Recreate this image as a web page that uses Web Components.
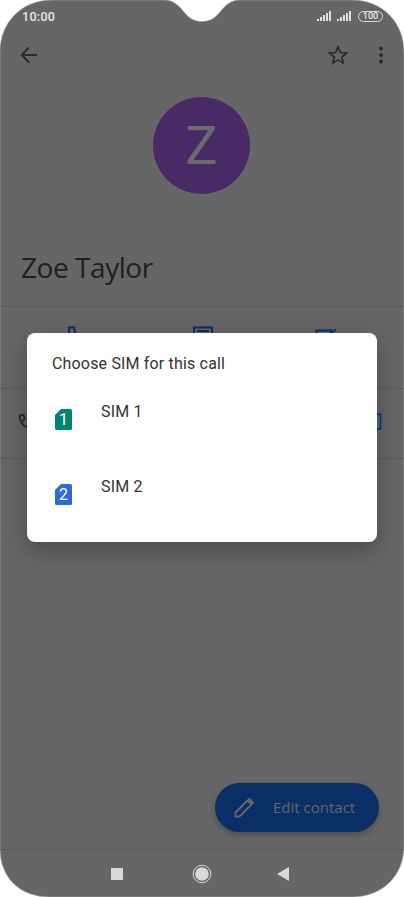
<!DOCTYPE html>
<html><head><meta charset="utf-8"><style>
html,body{margin:0;padding:0;background:#fff}
body{font-family:Roboto,"Liberation Sans",sans-serif}
</style></head><body>
<phone-screen>
<status-bar></status-bar>
<app-bar></app-bar>
<contact-head initial="Z" name="Zoe Taylor"></contact-head>
<action-row></action-row>
<call-row></call-row>
<edit-fab>Edit contact</edit-fab>
<nav-bar></nav-bar>
<sim-dialog heading="Choose SIM for this call">
  <sim-option num="1" color="#00856f">SIM 1</sim-option>
  <sim-option num="2" color="#3367d6">SIM 2</sim-option>
</sim-dialog>
</phone-screen>
<script>
function def(name,html){
  customElements.define(name,class extends HTMLElement{
    constructor(){super();this.attachShadow({mode:'open'}).innerHTML=html;}
  });
}
def('phone-screen',`<style>
:host{display:flex;flex-direction:column;position:relative;isolation:isolate;width:404px;height:897px;overflow:hidden}
.bg{position:absolute;left:0;top:0;z-index:-1}
</style>
<svg class="bg" width="404" height="897" viewBox="0 0 404 897"><path fill="#666" stroke="#aaa" stroke-width=".6" d="M52 0H166C175 1 180 7 184 12C189 18 194 21.5 202 21.5C210 21.5 215 18 220 12C224 7 229 1 238 0H352C382 0 404 22 404 52V846C404 876 382 897 352 897H50C20 897 0 878 0 848V52C0 22 22 0 52 0Z"/></svg>
<slot></slot>`);
def('status-bar',`<style>
:host{display:flex;align-items:center;justify-content:space-between;height:32px;padding:0 21px 0 22px;box-sizing:border-box;color:#e8e8e8;font:500 12.5px Roboto,sans-serif;letter-spacing:.3px}
.r{display:flex;align-items:center;gap:5px}
.bat{width:23px;height:9px;border:1px solid #ddd;border-radius:6px;font:500 9px/9px Roboto,sans-serif;text-align:center;letter-spacing:0;margin-left:1px}
svg{display:block}
</style><span>10:00</span><span class="r">
<svg width="15" height="11" viewBox="0 0 15 11" fill="#e0e0e0"><rect x="0" y="8" width="2" height="2"/><rect x="3" y="6" width="2" height="4"/><rect x="6" y="4" width="2" height="6"/><rect x="9" y="2" width="2" height="8"/><rect x="12" y="0" width="2" height="10"/></svg>
<svg width="15" height="11" viewBox="0 0 15 11" fill="#e0e0e0"><rect x="0" y="8" width="2" height="2"/><rect x="3" y="6" width="2" height="4"/><rect x="6" y="4" width="2" height="6"/><rect x="9" y="2" width="2" height="8"/><rect x="12" y="0" width="2" height="10"/></svg>
<span class="bat">100</span></span>`);
def('app-bar',`<style>
:host{display:flex;align-items:center;height:46px;padding:0 20px;box-sizing:border-box}
.sp{flex:1}svg{display:block}
.star{margin-right:31px}
</style>
<svg width="18" height="18" viewBox="0 0 18 18" fill="none" stroke="#2b2b2b" stroke-width="1.9"><path d="M17 9H2M9 1.5 1.7 9 9 16.5"/></svg>
<span class="sp"></span>
<svg class="star" width="20" height="20" viewBox="0 0 20 20" fill="none" stroke="#2b2b2b" stroke-width="1.7" stroke-linejoin="miter"><path d="M10 1.8 12.3 7.5 18.6 8 13.8 12 15.3 18.2 10 14.9 4.7 18.2 6.2 12 1.4 8 7.7 7.5Z"/></svg>
<svg width="4" height="18" viewBox="0 0 4 18" fill="#2b2b2b" style="margin-right:1px"><circle cx="2" cy="2.4" r="2"/><circle cx="2" cy="9" r="2"/><circle cx="2" cy="15.6" r="2"/></svg>`);
customElements.define('contact-head',class extends HTMLElement{
  constructor(){super();this.attachShadow({mode:'open'});}
  connectedCallback(){this.shadowRoot.innerHTML=`<style>
:host{display:block;height:229px;box-sizing:border-box;padding-top:19px;border-bottom:1px solid #5c5c5c}
.a{width:97px;height:97px;border-radius:50%;background:#472a66;color:#6b6b6b;margin:0 0 0 153px;display:flex;align-items:center;justify-content:center;font:400 54px Roboto,sans-serif}
h1{margin:55px 0 0 21px;font:400 28px/36px "Open Sans",Roboto,sans-serif;color:#1f1f1f;letter-spacing:-.45px}
</style><div class="a">${this.getAttribute('initial')}</div><h1>${this.getAttribute('name')}</h1>`;}
});
def('action-row',`<style>
:host{display:flex;height:82px;box-sizing:border-box;border-bottom:1px solid #5c5c5c;padding:19px 0 0 67px;align-items:flex-start}
svg{display:block}
</style>
<svg width="12" height="16" viewBox="0 0 12 16" fill="none" stroke="#0a2f66" stroke-width="2"><path d="M2 10V1.5H7L8.5 8"/></svg>
<svg style="margin-left:113px" width="22" height="16" viewBox="0 0 22 16" fill="none" stroke="#0a2f66" stroke-width="2"><path d="M2 15V1.5H20V15M5 5H17"/></svg>
<svg style="margin-left:101px;margin-top:3px" width="22" height="13" viewBox="0 0 22 13" fill="none" stroke="#0a2f66" stroke-width="2"><path d="M1.5 13V1.5H16V13M16 4 21 .5"/></svg>`);
def('call-row',`<style>
:host{display:flex;height:70px;box-sizing:border-box;border-bottom:1px solid #5c5c5c;padding:24px 22px 0 17px;justify-content:space-between;align-items:flex-start}
svg{display:block}
</style>
<svg width="15" height="17" viewBox="0 0 15 17" fill="none" stroke="#2b2b2b" stroke-width="1.8"><path d="M2.5 2C2.5 9 7 15 14 15.5M2.5 2H6.5L7.8 6 5 8.5"/></svg>
<svg width="10" height="17" viewBox="0 0 10 17" fill="none" stroke="#0a3f8a" stroke-width="1.8"><path d="M0 1H8.5V16H0"/></svg>`);
def('edit-fab',`<style>
:host{display:flex;align-items:center;align-self:flex-end;margin:324px 25px 0 0;width:164px;height:49px;box-sizing:border-box;padding-left:19px;border-radius:25px;background:#0a2f66;box-shadow:0 3px 6px rgba(0,0,0,.25);color:#666;font:500 15px "Open Sans",Roboto,sans-serif}
svg{display:block;margin-right:19px}
.l{margin-top:-2px}
</style>
<svg width="20" height="20" viewBox="0 0 20 20" fill="none" stroke="#666" stroke-width="1.8" stroke-linejoin="round"><path d="M1.5 18.5V14.5L13.5 2.5 17.5 6.5 5.5 18.5Z"/><path d="M14 2 15.3 .8 19.2 4.7 18 6" fill="#666"/></svg><span class="l"><slot></slot></span>`);
def('nav-bar',`<style>
:host{display:flex;align-items:center;height:48px;margin-top:17px;box-sizing:border-box;padding:0 0 0 111px;border-top:1px solid #5c5c5c}
.s{width:12px;height:12px;background:#d9d9d9}
.c{margin-left:69px}
.t{margin-left:65px}
svg{display:block}
</style><span class="s"></span>
<svg class="c" width="20" height="20" viewBox="0 0 20 20"><circle cx="10" cy="10" r="8.8" fill="none" stroke="#d9d9d9" stroke-width="1"/><circle cx="10" cy="10" r="6.8" fill="#d9d9d9"/></svg>
<svg class="t" width="12" height="14" viewBox="0 0 12 14" fill="#d9d9d9"><path d="M12 0V14L0 7Z"/></svg>`);
customElements.define('sim-dialog',class extends HTMLElement{
  constructor(){super();this.attachShadow({mode:'open'});}
  connectedCallback(){this.shadowRoot.innerHTML=`<style>
:host{position:absolute;left:27px;top:333px;width:350px;height:209px;box-sizing:border-box;padding:21px 25px 0;background:#fff;border-radius:8px;box-shadow:0 8px 24px rgba(0,0,0,.28);display:flex;flex-direction:column}
h2{margin:0 0 18px;font:400 16px/20px Roboto,sans-serif;letter-spacing:.17px;color:#333}
</style><h2>${this.getAttribute('heading')}</h2><slot></slot>`;}
});
customElements.define('sim-option',class extends HTMLElement{
  constructor(){super();this.attachShadow({mode:'open'});}
  connectedCallback(){const n=this.getAttribute('num'),c=this.getAttribute('color');this.shadowRoot.innerHTML=`<style>
:host{display:flex;align-items:flex-start;height:77px;font:400 16px/20px Roboto,sans-serif;letter-spacing:.17px;color:#333}
.i{position:relative;width:17px;height:21px;margin:17px 29px 0 3px;display:flex;align-items:center;justify-content:center;color:#fff;font:400 16px/21px Roboto,sans-serif;letter-spacing:0}
.i svg{position:absolute;inset:0}
.i b{position:relative;font-weight:400}
.t{padding-top:10px}
</style><span class="i"><svg width="17" height="21" viewBox="0 0 17 21"><path fill="${c}" d="M6 0H15.5A1.5 1.5 0 0 1 17 1.5V19.5A1.5 1.5 0 0 1 15.5 21H1.5A1.5 1.5 0 0 1 0 19.5V6Z"/></svg><b>${n}</b></span><span class="t"><slot></slot></span>`;}
});
</script>
</body></html>
